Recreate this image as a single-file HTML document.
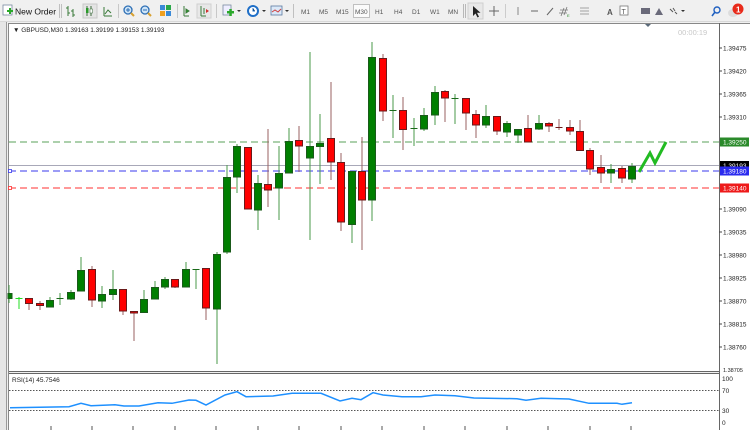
<!DOCTYPE html>
<html><head><meta charset="utf-8"><style>
html,body{margin:0;padding:0;width:750px;height:430px;overflow:hidden;background:#f0f0f0;font-family:"Liberation Sans",sans-serif}
svg text{font-family:"Liberation Sans",sans-serif}
</style></head><body>
<svg width="750" height="430" xmlns="http://www.w3.org/2000/svg">
<rect x="0" y="0" width="750" height="22" fill="#f0f0f0"/>
<line x1="0" y1="21.5" x2="750" y2="21.5" stroke="#d8d8d8"/>
<g>
<rect x="3" y="5" width="9" height="10" fill="#fff" stroke="#7a8aa0" stroke-width="0.8"/>
<rect x="7" y="10" width="6" height="2" fill="#2aa82a"/><rect x="9" y="8" width="2" height="6" fill="#2aa82a"/>
<text x="15" y="14.5" font-size="8.5" fill="#111">New Order</text>
<line x1="59.5" y1="4" x2="59.5" y2="18" stroke="#c0c0c0"/><line x1="61.5" y1="4" x2="61.5" y2="18" stroke="#c0c0c0"/>
<path d="M68 6v10M66 8h2M68 13h2M73 9v8M71 11h2M73 15h2" stroke="#3a7a3a" fill="none"/>
<rect x="83" y="4" width="14" height="14" fill="#e4e4e4" stroke="#c8c8c8"/>
<path d="M87 6v10M91 6v10" stroke="#3a6a3a"/><rect x="86" y="8" width="2.5" height="5" fill="#2a9a2a"/><rect x="90" y="9" width="2.5" height="4" fill="#fff" stroke="#3a6a3a" stroke-width="0.5"/>
<path d="M104 16V7M104 16h8M105 14l3-4 3 3" stroke="#3a7a3a" fill="none"/>
<line x1="118.5" y1="4" x2="118.5" y2="18" stroke="#c8c8c8"/>
<circle cx="128" cy="10" r="4" fill="#cfe5f8" stroke="#2d6fb5" stroke-width="1.3"/><path d="M131 13l3 3" stroke="#d8a030" stroke-width="2"/><path d="M126 10h4M128 8v4" stroke="#2d6fb5"/>
<circle cx="145" cy="10" r="4" fill="#cfe5f8" stroke="#2d6fb5" stroke-width="1.3"/><path d="M148 13l3 3" stroke="#d8a030" stroke-width="2"/><path d="M143 10h4" stroke="#2d6fb5"/>
<rect x="160" y="5" width="5" height="5" fill="#3a8ad8"/><rect x="166" y="5" width="5" height="5" fill="#2aa84a"/><rect x="160" y="11" width="5" height="5" fill="#f0a020"/><rect x="166" y="11" width="5" height="5" fill="#3a8ad8"/>
<line x1="177.5" y1="4" x2="177.5" y2="18" stroke="#c8c8c8"/>
<path d="M184 6v10M184 16h5M186 9l3 2-3 2z" stroke="#3a7a3a" fill="#2a9a2a"/>
<rect x="197" y="4" width="14" height="14" fill="#e8e8e8" stroke="#d0d0d0"/>
<path d="M201 6v10M201 16h5M204 8v6" stroke="#3a7a3a"/><path d="M206 9l3 2-3 2z" fill="#d03030"/>
<line x1="216.5" y1="4" x2="216.5" y2="18" stroke="#c8c8c8"/>
<rect x="223" y="5" width="8" height="10" fill="#eef" stroke="#7a8aa0" stroke-width="0.8"/><rect x="227" y="11" width="7" height="2.5" fill="#2aa82a"/><rect x="229.3" y="9" width="2.5" height="7" fill="#2aa82a"/>
<path d="M237 10l2 2 2-2z" fill="#333"/>
<circle cx="253" cy="11" r="5" fill="#fff" stroke="#1f6fc8" stroke-width="2"/><path d="M253 8v3h2" stroke="#1f6fc8"/>
<path d="M262 10l2 2 2-2z" fill="#333"/>
<rect x="271" y="6" width="11" height="9" fill="#dbe9f8" stroke="#5a7aa0" stroke-width="0.8"/><path d="M272 12l3-2 3 2 3-3" stroke="#d04040" fill="none"/>
<path d="M285 10l2 2 2-2z" fill="#333"/>
<line x1="293.5" y1="4" x2="293.5" y2="18" stroke="#c0c0c0"/>
<g font-size="6.5" fill="#555">
<text x="301" y="14">M1</text><text x="319" y="14">M5</text><text x="336" y="14">M15</text>
<rect x="353.5" y="4.5" width="16" height="13" fill="#fbfbfb" stroke="#c0c0c0"/><text x="355" y="14">M30</text>
<text x="375" y="14">H1</text><text x="394" y="14">H4</text><text x="412" y="14">D1</text><text x="430" y="14">W1</text><text x="448" y="14">MN</text>
</g>
<line x1="463.5" y1="4" x2="463.5" y2="18" stroke="#b8b8b8"/><line x1="465.5" y1="4" x2="465.5" y2="18" stroke="#b8b8b8"/>
<rect x="468" y="3" width="15" height="16" fill="#e8e8e8" stroke="#cfcfcf"/>
<path d="M473 6v10l2.5-2.5 2 4 1.5-.7-2-4h3.5z" fill="#222"/>
<path d="M494 6v10M489 11h10" stroke="#666"/>
<line x1="505.5" y1="4" x2="505.5" y2="18" stroke="#ccc"/>
<path d="M518 7v8" stroke="#888"/>
<path d="M531 11h7" stroke="#666"/>
<path d="M547 15l6-7" stroke="#666"/>
<path d="M564 8l-3 8M567 7l-3 8M560 10h8M559 13h8" stroke="#777" stroke-width="0.8"/><text x="567" y="17" font-size="4" fill="#2a8a2a">E</text>
<path d="M580 8h9M580 11h9M580 14h9" stroke="#888" stroke-width="0.8"/>
<text x="607" y="15" font-size="8" fill="#555" font-weight="bold">A</text>
<rect x="620" y="6" width="8" height="9" fill="#fff" stroke="#777" stroke-width="0.8"/><text x="621.5" y="14" font-size="7" fill="#555">T</text>
<rect x="641" y="8" width="9" height="6" fill="#6a6a7a"/>
<path d="M655 15l4-7 4 7z" fill="#6a6a7a"/>
<path d="M670 9l3 3M673 8l2 3M675 12l2 2" stroke="#555"/>
<path d="M681 10l2 2 2-2z" fill="#333"/>
<circle cx="717" cy="10" r="3" fill="none" stroke="#2060c0" stroke-width="1.4"/><path d="M715 12l-3 4" stroke="#2060c0" stroke-width="1.6"/>
<ellipse cx="733" cy="13" rx="5" ry="4" fill="#ddd"/>
<circle cx="738" cy="9" r="5.5" fill="#e82a1a"/><text x="736" y="12.5" font-size="8" fill="#fff" font-weight="bold">1</text>
</g>
<rect x="0" y="22" width="7" height="408" fill="#e6e6e6"/>
<line x1="6.5" y1="22" x2="6.5" y2="430" stroke="#9a9a9a"/>
<rect x="8" y="23" width="712" height="348" fill="#fff"/>
<rect x="8" y="374" width="712" height="56" fill="#fff"/>
<line x1="8" y1="23.5" x2="750" y2="23.5" stroke="#888"/>
<line x1="719.5" y1="23" x2="719.5" y2="430" stroke="#666"/>
<line x1="8" y1="371.5" x2="720" y2="371.5" stroke="#666"/>
<line x1="8" y1="373.5" x2="720" y2="373.5" stroke="#666"/>
<line x1="8.5" y1="23" x2="8.5" y2="430" stroke="#888"/>
<rect x="720" y="24" width="30" height="406" fill="#fff"/>
<text x="13" y="32" font-size="6.5" fill="#222">▼ GBPUSD,M30  1.39163 1.39199 1.39153 1.39193</text>
<path d="M645 24l3 3 3-3z" fill="#5a6a7a"/>
<text x="678" y="35" font-size="7.5" fill="#c8c8c8">00:00:19</text>
<line x1="9" y1="142" x2="719" y2="142" stroke="#5aa05a" stroke-dasharray="7,4"/>
<line x1="9" y1="165.5" x2="719" y2="165.5" stroke="#a8a8b8"/>
<line x1="9" y1="171" x2="719" y2="171" stroke="#3a3aee" stroke-dasharray="7,4"/>
<line x1="9" y1="188" x2="719" y2="188" stroke="#ff3030" stroke-dasharray="7,4"/>
<rect x="8.5" y="169.5" width="3" height="3" fill="#fff" stroke="#3a3aee" stroke-width="0.8"/>
<rect x="8.5" y="186.5" width="3" height="3" fill="#fff" stroke="#ff3030" stroke-width="0.8"/>
<g stroke-width="1">
<g stroke="#4a9a4a" fill="#007f00">
<line x1="9" y1="285" x2="9" y2="303"/><rect x="8" y="293.5" width="4" height="5" stroke="#1a5a1a"/>
<line x1="19" y1="297" x2="19" y2="309" stroke="#22dd22"/><line x1="15.5" y1="298.5" x2="22.5" y2="298.5" stroke="#22dd22"/>
<line x1="50" y1="297" x2="50" y2="307"/><rect x="46.5" y="300.5" width="7" height="6.5" stroke="#1a5a1a"/>
<line x1="60" y1="293" x2="60" y2="305"/><line x1="56.5" y1="298.5" x2="63.5" y2="298.5" stroke="#1a6a1a"/>
<line x1="71" y1="290" x2="71" y2="300"/><rect x="67.5" y="292.5" width="7" height="6.5" stroke="#1a5a1a"/>
<line x1="81" y1="257" x2="81" y2="291"/><rect x="77.5" y="270.5" width="7" height="20.5" stroke="#1a5a1a"/>
<line x1="102" y1="286" x2="102" y2="308"/><rect x="98.5" y="294.5" width="7" height="6.5" stroke="#1a5a1a"/>
<line x1="113" y1="270" x2="113" y2="300"/><rect x="109.5" y="289.5" width="7" height="5" stroke="#1a5a1a"/>
<line x1="144" y1="290" x2="144" y2="313"/><rect x="140.5" y="299.5" width="7" height="13" stroke="#1a5a1a"/>
<line x1="155" y1="281" x2="155" y2="299"/><rect x="151.5" y="287.5" width="7" height="11.5" stroke="#1a5a1a"/>
<line x1="165" y1="277" x2="165" y2="289"/><rect x="161.5" y="279.5" width="7" height="7.5" stroke="#1a5a1a"/>
<line x1="186" y1="262" x2="186" y2="287"/><rect x="182.5" y="269.5" width="7" height="17.5" stroke="#1a5a1a"/>
<line x1="196" y1="269" x2="196" y2="289"/><line x1="192.5" y1="269.5" x2="199.5" y2="269.5" stroke="#1a6a1a"/>
<line x1="217" y1="252" x2="217" y2="364"/><rect x="213.5" y="254.5" width="7" height="54.5" stroke="#1a5a1a"/>
<line x1="227" y1="165" x2="227" y2="254"/><rect x="223.5" y="177.5" width="7" height="74.5" stroke="#1a5a1a"/>
<line x1="237" y1="144" x2="237" y2="193"/><rect x="233.5" y="146.5" width="7" height="30.5" stroke="#1a5a1a"/>
<line x1="258" y1="175" x2="258" y2="230"/><rect x="254.5" y="183.5" width="7" height="26.5" stroke="#1a5a1a"/>
<line x1="279" y1="146" x2="279" y2="220"/><rect x="275.5" y="173.5" width="7" height="14.5" stroke="#1a5a1a"/>
<line x1="289" y1="128" x2="289" y2="173"/><rect x="285.5" y="141.5" width="7" height="31.5" stroke="#1a5a1a"/>
<line x1="310" y1="52" x2="310" y2="240"/><rect x="306.5" y="146.5" width="7" height="11.5" stroke="#1a5a1a"/>
<line x1="320" y1="114" x2="320" y2="184"/><rect x="316.5" y="143.5" width="7" height="3" stroke="#1a5a1a"/>
<line x1="352" y1="171" x2="352" y2="243"/><rect x="348.5" y="171.5" width="7" height="53" stroke="#1a5a1a"/>
<line x1="372" y1="42" x2="372" y2="221"/><rect x="368.5" y="57.5" width="7" height="142.5" stroke="#1a5a1a"/>
<line x1="393" y1="95" x2="393" y2="138"/><line x1="389.5" y1="110.5" x2="396.5" y2="110.5" stroke="#1a6a1a"/>
<line x1="414" y1="118" x2="414" y2="146"/><line x1="410.5" y1="128.5" x2="417.5" y2="128.5" stroke="#1a6a1a"/>
<line x1="424" y1="108" x2="424" y2="131"/><rect x="420.5" y="115.5" width="7" height="13.5" stroke="#1a5a1a"/>
<line x1="435" y1="86" x2="435" y2="125"/><rect x="431.5" y="92.5" width="7" height="22.5" stroke="#1a5a1a"/>
<line x1="455" y1="94" x2="455" y2="124"/><line x1="451.5" y1="98.5" x2="458.5" y2="98.5" stroke="#1a6a1a"/>
<line x1="486" y1="105" x2="486" y2="128"/><rect x="482.5" y="116.5" width="7" height="8.5" stroke="#1a5a1a"/>
<line x1="507" y1="121" x2="507" y2="137"/><rect x="503.5" y="123.5" width="7" height="8.5" stroke="#1a5a1a"/>
<line x1="518" y1="129" x2="518" y2="143"/><rect x="514.5" y="129.5" width="7" height="5.5" stroke="#1a5a1a"/>
<line x1="539" y1="115" x2="539" y2="130"/><rect x="535.5" y="123.5" width="7" height="5.5" stroke="#1a5a1a"/>
<line x1="611" y1="164" x2="611" y2="183"/><rect x="607.5" y="169.5" width="7" height="3.5" stroke="#1a5a1a"/>
<line x1="632" y1="163" x2="632" y2="183"/><rect x="628.5" y="166.5" width="7" height="12.5" stroke="#1a5a1a"/>
</g>
<g stroke="#9a6060" fill="#ff0000">
<line x1="29" y1="298" x2="29" y2="310"/><rect x="25.5" y="298.5" width="7" height="5" stroke="#6a1a1a"/>
<line x1="40" y1="301" x2="40" y2="310"/><rect x="36.5" y="303.5" width="7" height="2" stroke="#6a1a1a"/>
<line x1="92" y1="266" x2="92" y2="307"/><rect x="88.5" y="269.5" width="7" height="30.5" stroke="#6a1a1a"/>
<line x1="123" y1="289" x2="123" y2="315"/><rect x="119.5" y="289.5" width="7" height="21.5" stroke="#6a1a1a"/>
<line x1="134" y1="311" x2="134" y2="341"/><rect x="130.5" y="311.5" width="7" height="1.5" stroke="#6a1a1a"/>
<line x1="175" y1="279" x2="175" y2="288"/><rect x="171.5" y="279.5" width="7" height="7.5" stroke="#6a1a1a"/>
<line x1="206" y1="268" x2="206" y2="320"/><rect x="202.5" y="268.5" width="7" height="39.5" stroke="#6a1a1a"/>
<line x1="248" y1="147" x2="248" y2="209"/><rect x="244.5" y="147.5" width="7" height="61.5" stroke="#6a1a1a"/>
<line x1="268" y1="129" x2="268" y2="207"/><rect x="264.5" y="184.5" width="7" height="5.5" stroke="#6a1a1a"/>
<line x1="299" y1="126" x2="299" y2="172"/><rect x="295.5" y="140.5" width="7" height="5.5" stroke="#6a1a1a"/>
<line x1="331" y1="82" x2="331" y2="180"/><rect x="327.5" y="138.5" width="7" height="23.5" stroke="#6a1a1a"/>
<line x1="341" y1="153" x2="341" y2="231"/><rect x="337.5" y="162.5" width="7" height="59.5" stroke="#6a1a1a"/>
<line x1="362" y1="137" x2="362" y2="250"/><rect x="358.5" y="171.5" width="7" height="28.5" stroke="#6a1a1a"/>
<line x1="383" y1="54" x2="383" y2="121"/><rect x="379.5" y="58.5" width="7" height="52.5" stroke="#6a1a1a"/>
<line x1="403" y1="97" x2="403" y2="150"/><rect x="399.5" y="110.5" width="7" height="19" stroke="#6a1a1a"/>
<line x1="445" y1="90" x2="445" y2="122"/><rect x="441.5" y="91.5" width="7" height="6.5" stroke="#6a1a1a"/>
<line x1="466" y1="98" x2="466" y2="130"/><rect x="462.5" y="98.5" width="7" height="14.5" stroke="#6a1a1a"/>
<line x1="476" y1="110" x2="476" y2="138"/><rect x="472.5" y="114.5" width="7" height="10.5" stroke="#6a1a1a"/>
<line x1="497" y1="116" x2="497" y2="135"/><rect x="493.5" y="116.5" width="7" height="14.5" stroke="#6a1a1a"/>
<line x1="528" y1="115" x2="528" y2="142"/><rect x="524.5" y="128.5" width="7" height="13.5" stroke="#6a1a1a"/>
<line x1="549" y1="122" x2="549" y2="132"/><rect x="545.5" y="123.5" width="7" height="2.5" stroke="#6a1a1a"/>
<line x1="559" y1="119" x2="559" y2="130"/><line x1="555.5" y1="127.5" x2="562.5" y2="127.5" stroke="#6a1a1a"/>
<line x1="570" y1="120" x2="570" y2="135"/><rect x="566.5" y="127.5" width="7" height="3.5" stroke="#6a1a1a"/>
<line x1="580" y1="120" x2="580" y2="151"/><rect x="576.5" y="131.5" width="7" height="19" stroke="#6a1a1a"/>
<line x1="590" y1="148" x2="590" y2="175"/><rect x="586.5" y="150.5" width="7" height="18.5" stroke="#6a1a1a"/>
<line x1="601" y1="155" x2="601" y2="183"/><rect x="597.5" y="167.5" width="7" height="5.5" stroke="#6a1a1a"/>
<line x1="622" y1="166" x2="622" y2="183"/><rect x="618.5" y="168.5" width="7" height="9.5" stroke="#6a1a1a"/>
</g>
</g>
<polyline points="639,172 650,153 655,163 666,142" fill="none" stroke="#22bb22" stroke-width="3" stroke-linejoin="miter"/>
<g font-size="6.5" fill="#222">
<g stroke="#444"><line x1="719" y1="48" x2="722" y2="48"/><line x1="719" y1="71" x2="722" y2="71"/><line x1="719" y1="94" x2="722" y2="94"/><line x1="719" y1="117" x2="722" y2="117"/><line x1="719" y1="209" x2="722" y2="209"/><line x1="719" y1="232" x2="722" y2="232"/><line x1="719" y1="255" x2="722" y2="255"/><line x1="719" y1="278" x2="722" y2="278"/><line x1="719" y1="301" x2="722" y2="301"/><line x1="719" y1="324" x2="722" y2="324"/><line x1="719" y1="347" x2="722" y2="347"/></g>
<text x="723" y="50.5">1.39475</text><text x="723" y="73.5">1.39420</text><text x="723" y="96.5">1.39365</text><text x="723" y="119.5">1.39310</text>
<text x="723" y="211.5">1.39090</text><text x="723" y="234.5">1.39035</text><text x="723" y="257.5">1.38980</text><text x="723" y="280.5">1.38925</text><text x="723" y="303.5">1.38870</text><text x="723" y="326.5">1.38815</text><text x="723" y="349.5">1.38760</text>
<text x="723" y="372" font-size="5.5">1.38705</text>
<rect x="720" y="137.5" width="29" height="9" fill="#2a8a2a"/><text x="723" y="144.5" fill="#fff">1.39250</text>
<rect x="720" y="161" width="29" height="9" fill="#000"/><text x="723" y="168" fill="#fff">1.39193</text>
<rect x="720" y="166.5" width="29" height="9" fill="#2a2aee"/><text x="723" y="173.5" fill="#fff">1.39180</text>
<rect x="720" y="183.5" width="29" height="9" fill="#ee1a1a"/><text x="723" y="190.5" fill="#fff">1.39140</text>
<text x="722" y="381">100</text><text x="722" y="393">70</text><text x="722" y="413">30</text><text x="722" y="425">0</text>
</g>
<text x="12" y="382" font-size="6.5" fill="#222">RSI(14) 45.7546</text>
<line x1="9" y1="390.5" x2="719" y2="390.5" stroke="#555" stroke-dasharray="1.5,1.5"/>
<line x1="9" y1="410.5" x2="719" y2="410.5" stroke="#555" stroke-dasharray="1.5,1.5"/>
<polyline fill="none" stroke="#1e90ff" stroke-width="1.5" points="10,407.7 69,406.7 81,403.3 91,405.7 115,404.7 124,406 139,406 158,402.7 172,403.3 189,400 196,400.3 206,405 225,395 237,391.7 246,396.7 273,396 292,393.3 321,393.3 340,401 352,398.3 361,399.7 373,392.7 383,395 402,396.7 421,396.7 435,395 455,395.7 474,398 517,398.7 526,400.3 541,398.3 569,399 589,403.3 617,403.3 622,404.3 632,402.7"/>
<g stroke="#555"><line x1="51" y1="426" x2="51" y2="430"/><line x1="92" y1="426" x2="92" y2="430"/><line x1="133" y1="426" x2="133" y2="430"/><line x1="175" y1="426" x2="175" y2="430"/><line x1="216" y1="426" x2="216" y2="430"/><line x1="258" y1="426" x2="258" y2="430"/><line x1="299" y1="426" x2="299" y2="430"/><line x1="341" y1="426" x2="341" y2="430"/><line x1="382" y1="426" x2="382" y2="430"/><line x1="424" y1="426" x2="424" y2="430"/><line x1="465" y1="426" x2="465" y2="430"/><line x1="507" y1="426" x2="507" y2="430"/><line x1="548" y1="426" x2="548" y2="430"/><line x1="590" y1="426" x2="590" y2="430"/><line x1="631" y1="426" x2="631" y2="430"/></g>
</svg>
</body></html>
